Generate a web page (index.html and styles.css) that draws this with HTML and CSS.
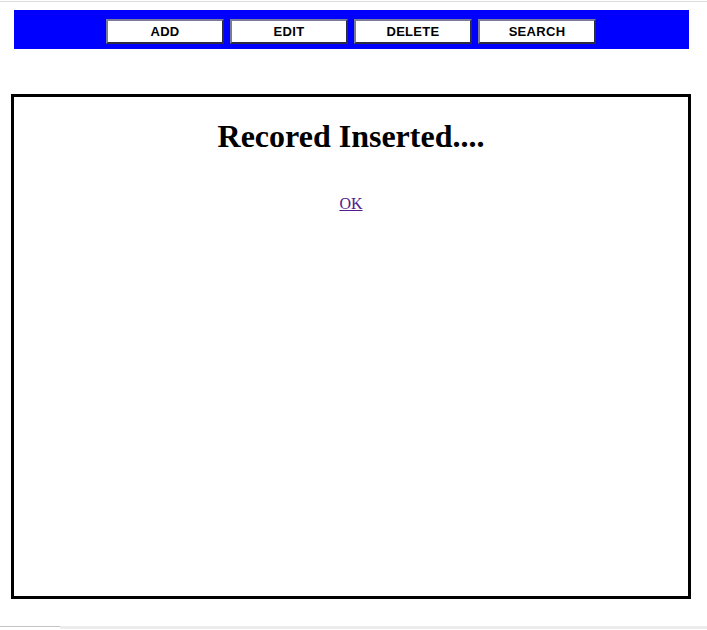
FILE: index.html
```html
<!DOCTYPE html>
<html>
<head>
<meta charset="utf-8">
<link rel="stylesheet" href="styles.css">
</head>
<body>
<div class="topline"></div>
<nav class="menu">
  <button class="btn">ADD</button>
  <button class="btn">EDIT</button>
  <button class="btn">DELETE</button>
  <button class="btn">SEARCH</button>
</nav>
<main class="box">
  <h1 class="title">Recored Inserted....</h1>
  <p class="ok"><a href="#" class="oklink">OK</a></p>
</main>
<div class="scrollbar"><div class="thumb"></div></div>
</body>
</html>
```
FILE: styles.css
```css
html, body {
  margin: 0;
  padding: 0;
  background: #fff;
}
body {
  font-family: "Liberation Serif", "Times New Roman", serif;
  height: 630px;
  overflow: hidden;
  display: flex;
  flex-direction: column;
}
.topline {
  height: 1px;
  margin-top: 1px;
  background: #dcdcdc;
}
.menu {
  margin: 8px 18px 0 14px;
  height: 39px;
  box-sizing: border-box;
  padding: 9px 0 0 92px;
  background: #0000ff;
  display: flex;
  justify-content: flex-start;
  align-items: flex-start;
  gap: 6px;
}
.btn {
  width: 118px;
  height: 25px;
  box-sizing: border-box;
  margin: 0;
  padding: 0;
  background: #fff;
  border-style: solid;
  border-width: 2px;
  border-color: #7a7a9a #2c2c44 #2c2c44 #7a7a9a;
  font-family: "Liberation Sans", Arial, sans-serif;
  font-weight: bold;
  font-size: 13px;
  letter-spacing: 0.3px;
  color: #000;
}
.box {
  margin: 45px 16px 0 11px;
  height: 505px;
  box-sizing: border-box;
  border: 3px solid #000;
  text-align: center;
}
.title {
  font-size: 32px;
  font-weight: bold;
  margin: 21px 0 0;
  line-height: 37px;
}
.ok {
  margin: 40px 0 0;
  font-size: 16px;
  line-height: 18px;
}
.oklink {
  color: #551a8b;
}
.scrollbar {
  margin-top: 27px;
  height: 3px;
  background: #ececec;
  display: flex;
}
.thumb {
  width: 60px;
  border-top: 1px solid #c4c4c4;
  background: #fff;
}
```
